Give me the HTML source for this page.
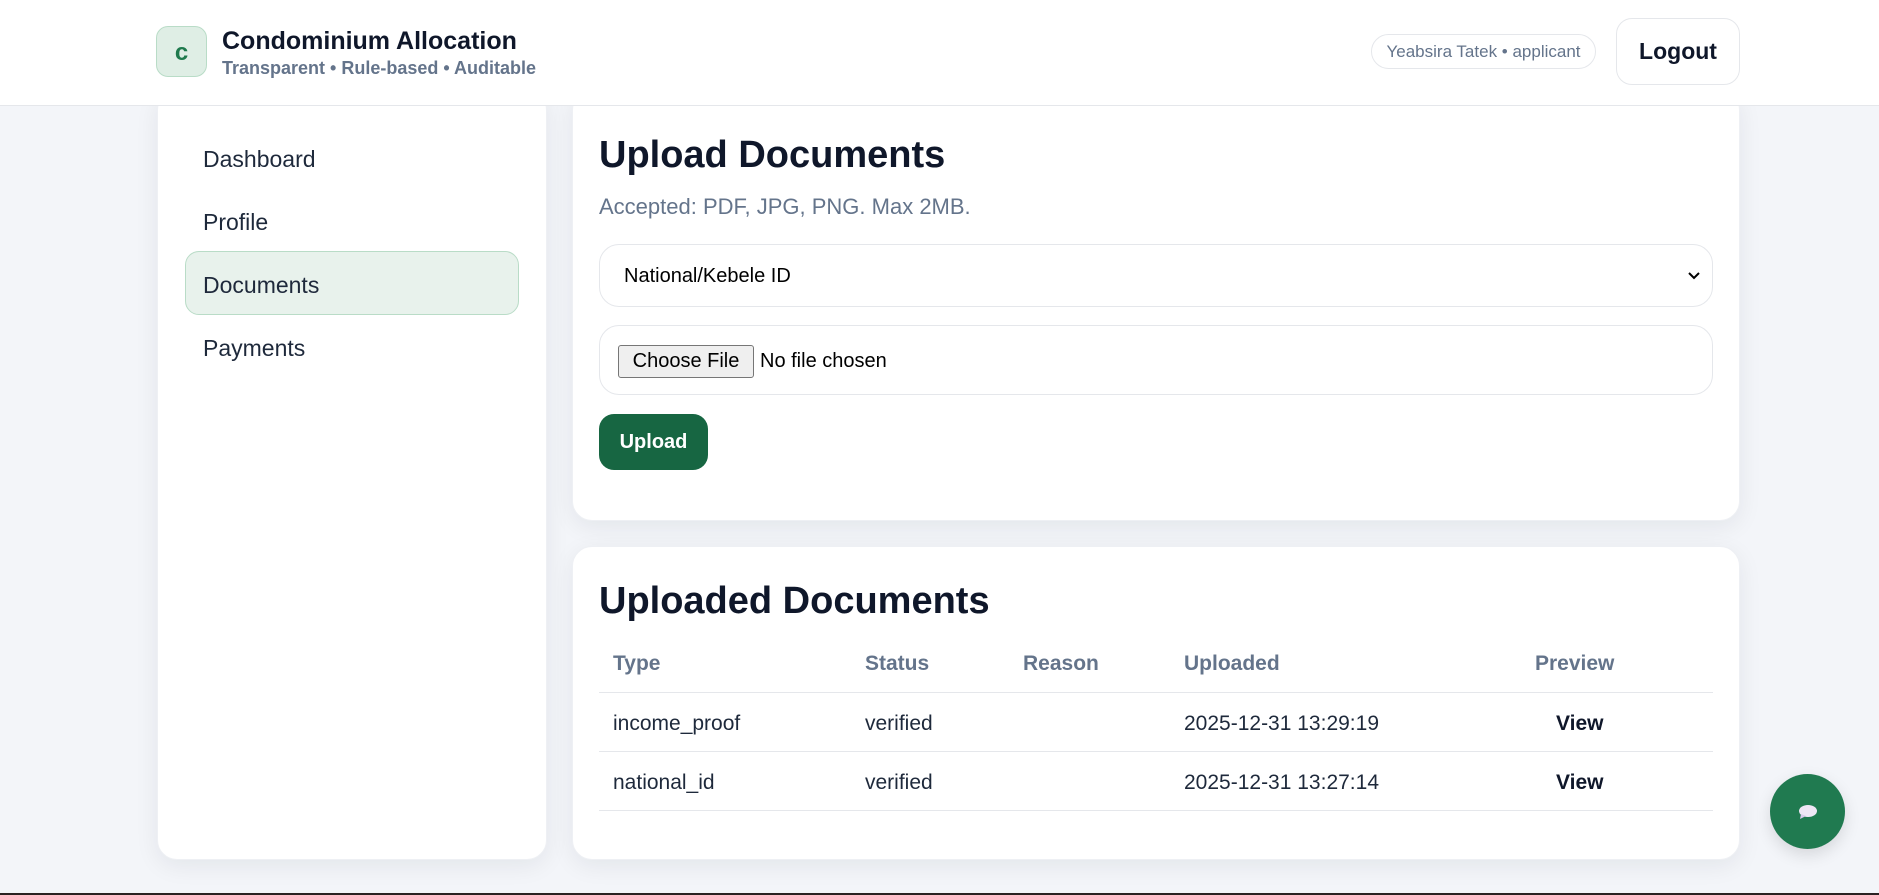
<!DOCTYPE html>
<html><head><style>
*{box-sizing:border-box;margin:0;padding:0}
body{width:1879px;height:895px;overflow:hidden;background:#f3f5f9;font-family:"Liberation Sans",sans-serif;position:relative;color:#0f172a}
.hdr{position:absolute;left:0;top:0;width:1879px;height:106px;background:#fff;border-bottom:1px solid #e5e7eb;z-index:2}
.logo{position:absolute;left:156px;top:26px;width:51px;height:51px;border-radius:12px;background:#dfeee5;border:1px solid #b9dcc7;color:#1f7a4d;font-weight:bold;font-size:24px;text-align:center;line-height:51px}
.t1{position:absolute;left:222px;top:27px;font-size:25px;font-weight:bold;color:#0f172a}
.t2{position:absolute;left:222px;top:58px;font-size:18px;font-weight:bold;color:#64748b}
.pill{position:absolute;left:1371px;top:34px;width:225px;height:35px;border:1px solid #e5e7eb;border-radius:18px;font-size:17px;color:#64748b;text-align:center;line-height:33px}
.lo{position:absolute;left:1616px;top:18px;width:124px;height:67px;border:1px solid #e5e7eb;border-radius:16px;font-size:23px;font-weight:bold;text-align:center;line-height:65px}
.card{position:absolute;background:#fff;border-radius:20px;box-shadow:0 6px 24px rgba(15,23,42,.07);border:1px solid #eef0f4}
.nav{position:absolute;left:203px;font-size:23px;color:#1e293b}
.act{position:absolute;left:185px;top:251px;width:334px;height:64px;background:#e8f2ec;border:1px solid #b9dcc7;border-radius:14px}
h1{position:absolute;left:599px;font-size:38px;font-weight:bold;color:#0f172a}
.inp{position:absolute;left:599px;width:1114px;border:1px solid #e5e7eb;border-radius:20px;background:#fff}
.th{position:absolute;top:652px;font-size:21px;font-weight:bold;color:#64748b}
.td{position:absolute;font-size:21px;color:#1e293b}
.ln{position:absolute;left:599px;width:1114px;height:1px;background:#e5e7eb}
</style></head><body>
<div class="hdr">
<div class="logo">c</div>
<div class="t1">Condominium Allocation</div>
<div class="t2">Transparent • Rule-based • Auditable</div>
<div class="pill">Yeabsira Tatek • applicant</div>
<div class="lo">Logout</div>
</div>
<div class="card" style="left:157px;top:90px;width:390px;height:770px"></div>
<div class="act"></div>
<div class="nav" style="top:146px">Dashboard</div>
<div class="nav" style="top:209px">Profile</div>
<div class="nav" style="top:272px">Documents</div>
<div class="nav" style="top:335px">Payments</div>

<div class="card" style="left:572px;top:90px;width:1168px;height:431px"></div>
<h1 style="top:134px">Upload Documents</h1>
<div style="position:absolute;left:599px;top:194px;font-size:22px;color:#64748b">Accepted: PDF, JPG, PNG. Max 2MB.</div>
<div class="inp" style="top:244px;height:63px"><span style="position:absolute;left:24px;top:20px;font-size:20px;color:#000">National/Kebele ID</span>
<svg style="position:absolute;right:12px;top:27px" width="12" height="9" viewBox="0 0 12 9"><path d="M1 1l5 5 5-5" fill="none" stroke="#000" stroke-width="2"/></svg></div>
<div class="inp" style="top:325px;height:70px"><span style="position:absolute;left:18px;top:19px;width:136px;height:33px;background:#efefef;border:1px solid #767676;border-radius:3px;font-size:20px;text-align:center;line-height:31px;color:#000">Choose File</span><span style="position:absolute;left:160px;top:24px;font-size:20px;color:#000">No file chosen</span></div>
<div style="position:absolute;left:599px;top:414px;width:109px;height:56px;background:#176642;border-radius:15px;color:#fff;font-weight:bold;font-size:20px;text-align:center;line-height:56px">Upload</div>

<div class="card" style="left:572px;top:546px;width:1168px;height:314px"></div>
<h1 style="top:580px">Uploaded Documents</h1>
<div class="th" style="left:613px">Type</div>
<div class="th" style="left:865px">Status</div>
<div class="th" style="left:1023px">Reason</div>
<div class="th" style="left:1184px">Uploaded</div>
<div class="th" style="left:1535px">Preview</div>
<div class="ln" style="top:692px"></div>
<div class="td" style="left:613px;top:712px">income_proof</div>
<div class="td" style="left:865px;top:712px">verified</div>
<div class="td" style="left:1184px;top:712px">2025-12-31 13:29:19</div>
<div class="td" style="left:1556px;top:712px;font-weight:bold;color:#0f172a">View</div>
<div class="ln" style="top:751px"></div>
<div class="td" style="left:613px;top:771px">national_id</div>
<div class="td" style="left:865px;top:771px">verified</div>
<div class="td" style="left:1184px;top:771px">2025-12-31 13:27:14</div>
<div class="td" style="left:1556px;top:771px;font-weight:bold;color:#0f172a">View</div>
<div class="ln" style="top:810px"></div>

<div style="position:absolute;left:1770px;top:774px;width:75px;height:75px;border-radius:50%;background:#207a50;box-shadow:0 6px 16px rgba(0,0,0,.12)">
<svg style="position:absolute;left:27px;top:30px" width="21" height="16" viewBox="0 0 21 16"><ellipse cx="11" cy="7" rx="9" ry="6" fill="#eee6f5"/><path d="M4 10 L3 15 L9 12z" fill="#d9c9ec"/></svg></div>
<div style="position:absolute;left:0;top:893px;width:1879px;height:2px;background:#2a2222"></div>
</body></html>
